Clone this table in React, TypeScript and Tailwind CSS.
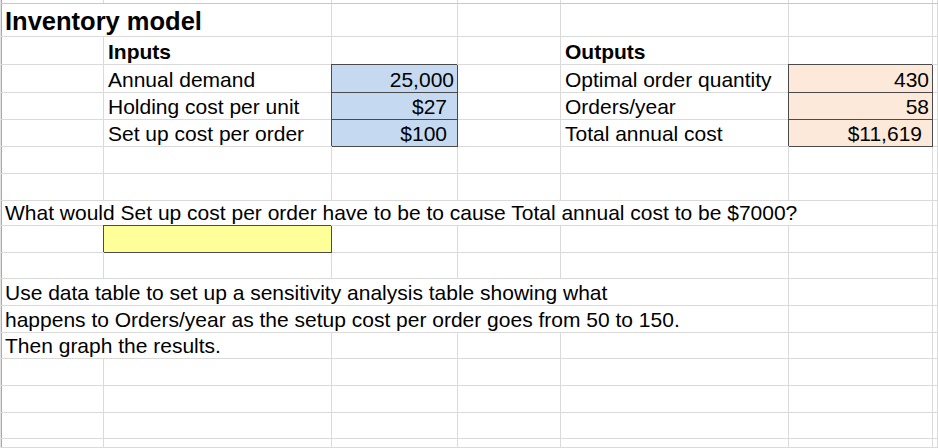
type Cell = {
  t?: string;
  span?: 2 | 5 | 6;
  b?: boolean;
  big?: boolean;
  num?: boolean;
  cur?: boolean;
  fill?: 'blue' | 'orange' | 'yellow';
};

const COLS = 'grid-cols-[103px_228px_126px_103px_228px_144px_1fr]';

const spanClass = { 2: 'col-span-2', 5: 'col-span-5', 6: 'col-span-6' };

const fillClass = {
  blue: 'bg-[#c5d9f1] border-[#4a4a4a] shadow-[-1px_-1px_0_#4a4a4a]',
  orange: 'bg-[#fde9d9] border-[#4a4a4a] shadow-[-1px_-1px_0_#4a4a4a]',
  yellow: 'bg-[#ffff99] border-[#4a4a4a] shadow-[-1px_-1px_0_#4a4a4a]',
};

const empty = (n: number): Cell[] => Array.from({ length: n }, () => ({}));

// rows of the sheet, Excel-style: long text spills over neighbours (spanned here)
const rows: { h: string; cells: Cell[] }[] = [
  { h: 'h-[33px]', cells: [{ t: 'Inventory model', span: 2, b: true, big: true }, ...empty(5)] },
  { h: 'h-[28px]', cells: [{}, { t: 'Inputs', b: true }, {}, {}, { t: 'Outputs', b: true }, {}, {}] },
  {
    h: 'h-[28px]',
    cells: [{}, { t: 'Annual demand' }, { t: '25,000', num: true, fill: 'blue' }, {}, { t: 'Optimal order quantity' }, { t: '430', num: true, fill: 'orange' }, {}],
  },
  {
    h: 'h-[27px]',
    cells: [{}, { t: 'Holding cost per unit' }, { t: '$27', cur: true, fill: 'blue' }, {}, { t: 'Orders/year' }, { t: '58', num: true, fill: 'orange' }, {}],
  },
  {
    h: 'h-[27px]',
    cells: [{}, { t: 'Set up cost per order' }, { t: '$100', cur: true, fill: 'blue' }, {}, { t: 'Total annual cost' }, { t: '$11,619', cur: true, fill: 'orange' }, {}],
  },
  { h: 'h-[27px]', cells: empty(7) },
  { h: 'h-[27px]', cells: empty(7) },
  { h: 'h-[26px]', cells: [{ t: 'What would Set up cost per order have to be to cause Total annual cost to be $7000?', span: 6 }, {}] },
  { h: 'h-[27px]', cells: [{}, { fill: 'yellow' }, ...empty(5)] },
  { h: 'h-[26px]', cells: empty(7) },
  { h: 'h-[27px]', cells: [{ t: 'Use data table to set up a sensitivity analysis table showing what', span: 5 }, {}, {}] },
  { h: 'h-[27px]', cells: [{ t: 'happens to Orders/year as the setup cost per order goes from 50 to 150.', span: 5 }, {}, {}] },
  { h: 'h-[26px]', cells: [{ t: 'Then graph the results.', span: 2 }, ...empty(5)] },
  { h: 'h-[27px]', cells: empty(7) },
  { h: 'h-[27px]', cells: empty(7) },
  { h: 'h-[26px]', cells: empty(7) },
  { h: 'h-[9px]', cells: empty(7) },
];

function SheetCell({ c }: { c: Cell }) {
  const cls = [
    'flex items-end whitespace-nowrap border-r border-b',
    c.fill ? fillClass[c.fill] : 'border-[#dadada]',
    c.span ? spanClass[c.span] : '',
    c.num ? 'justify-end pr-[3px]' : c.cur ? 'justify-end pr-[10px]' : 'pl-[4px]',
    c.big ? 'text-[25.5px] leading-[29px]' : 'text-[21px] leading-[24px]',
    c.b ? 'font-bold' : '',
  ].join(' ');
  return <div className={cls}>{c.t}</div>;
}

export default function App() {
  return (
    <div className="w-[938px] h-[448px] overflow-hidden bg-white text-black font-['Liberation_Sans',Arial,sans-serif] flex">
      <div className="w-[2px] bg-[#e3e3e3]" />
      <div className="w-[1px] bg-[#a9a9a9]" />
      <div className="flex-1 flex flex-col">
        {/* bottom edge of the column header strip */}
        <div className={`grid ${COLS} h-[4px] border-b border-[#c8c8c8]`}>
          {empty(7).map((_, i) => (
            <div key={i} className="border-r border-[#dadada]" />
          ))}
        </div>
        {rows.map((row, ri) => (
          <div key={ri} className={`grid ${COLS} ${row.h}`}>
            {row.cells.map((c, ci) => (
              <SheetCell key={ci} c={c} />
            ))}
          </div>
        ))}
      </div>
    </div>
  );
}
